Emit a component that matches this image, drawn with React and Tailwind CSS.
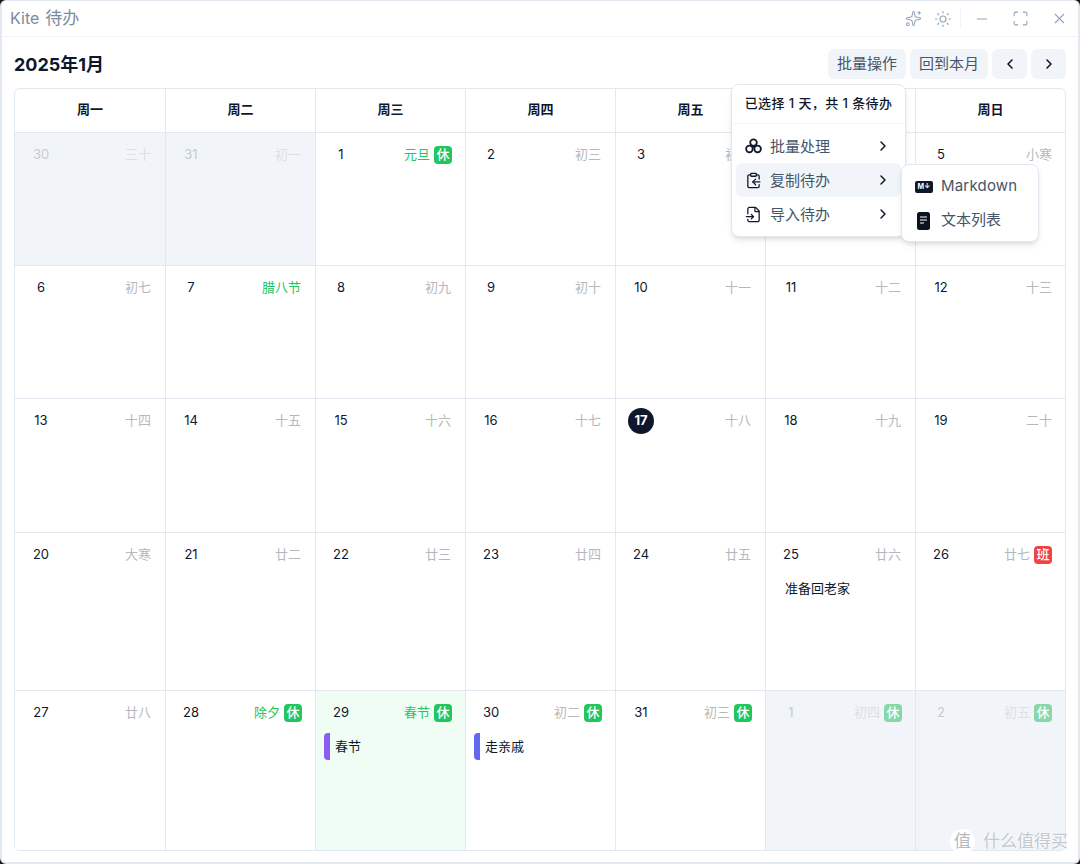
import React from 'react'
import { ChevronLeft, ChevronRight, Minus, Maximize, X, Sun, Sparkles, ClipboardCopy, FileInput } from 'lucide-react'

const weekdays = ['周一', '周二', '周三', '周四', '周五', '周六', '周日']

const cells = [
  { day: 30, lunar: '三十', muted: true },
  { day: 31, lunar: '初一', muted: true },
  { day: 1, lunar: '元旦', festival: true, badge: '休' },
  { day: 2, lunar: '初三' },
  { day: 3, lunar: '初四' },
  { day: 4, lunar: '初五' },
  { day: 5, lunar: '小寒' },
  { day: 6, lunar: '初七' },
  { day: 7, lunar: '腊八节', festival: true },
  { day: 8, lunar: '初九' },
  { day: 9, lunar: '初十' },
  { day: 10, lunar: '十一' },
  { day: 11, lunar: '十二' },
  { day: 12, lunar: '十三' },
  { day: 13, lunar: '十四' },
  { day: 14, lunar: '十五' },
  { day: 15, lunar: '十六' },
  { day: 16, lunar: '十七' },
  { day: 17, lunar: '十八', today: true },
  { day: 18, lunar: '十九' },
  { day: 19, lunar: '二十' },
  { day: 20, lunar: '大寒' },
  { day: 21, lunar: '廿二' },
  { day: 22, lunar: '廿三' },
  { day: 23, lunar: '廿四' },
  { day: 24, lunar: '廿五' },
  { day: 25, lunar: '廿六', todo: '准备回老家' },
  { day: 26, lunar: '廿七', badge: '班' },
  { day: 27, lunar: '廿八' },
  { day: 28, lunar: '除夕', festival: true, badge: '休' },
  { day: 29, lunar: '春节', festival: true, badge: '休', todo: '春节', bar: 'bg-[#8b5cf6]', holiday: true },
  { day: 30, lunar: '初二', badge: '休', todo: '走亲戚', bar: 'bg-[#6366f1]' },
  { day: 31, lunar: '初三', badge: '休' },
  { day: 1, lunar: '初四', badge: '休', muted: true },
  { day: 2, lunar: '初五', badge: '休', muted: true },
]

function DayCell({ cell, index }) {
  const firstCol = index % 7 === 0
  const lastCol = index % 7 === 6
  const lastRow = index >= 28
  return (
    <div
      className={`pt-[9px] ${firstCol ? '' : 'border-l'} ${lastRow ? '' : 'border-b'} border-[#e2e8f0] ${
        cell.muted ? 'bg-[#f1f5f9]' : cell.holiday ? 'bg-[#f0fdf4]' : 'bg-white'
      }`}
    >
      <div
        className={`flex h-[26px] items-center justify-between ${firstCol ? 'pl-[13px]' : 'pl-3'} ${
          cell.badge || lastCol ? 'pr-[13px]' : 'pr-[14px]'
        }`}
      >
        <span
          className={`flex size-[26px] items-center justify-center rounded-full text-[13px] ${
            cell.today ? 'bg-[#0f172a] font-bold text-white' : cell.muted ? 'text-[#c3cad6]' : 'text-[#0f172a]'
          }`}
        >
          {cell.day}
        </span>
        <span className="flex items-center gap-1">
          <span
            className={`text-[13px] ${
              cell.muted ? 'text-[#dcdfe5]' : cell.festival ? 'text-[#22c55e]' : 'text-[#b5b8bd]'
            }`}
          >
            {cell.lunar}
          </span>
          {cell.badge && (
            <span
              className={`flex size-[18px] items-center justify-center rounded-[4px] text-[13px] font-medium text-white ${
                cell.badge === '班' ? 'bg-[#ef4444]' : cell.muted ? 'bg-[#86d9a6]' : 'bg-[#22c55e]'
              }`}
            >
              {cell.badge}
            </span>
          )}
        </span>
      </div>
      {cell.todo && (
        <div className="mt-[7px] flex h-[27px] items-center">
          {cell.bar ? (
            <span className={`ml-[8px] mr-[5px] h-[27px] w-[6px] rounded-l-[4px] ${cell.bar}`} />
          ) : (
            <span className="w-[19px]" />
          )}
          <span className="text-[13px] text-[#0f172a]">{cell.todo}</span>
        </div>
      )}
    </div>
  )
}

function GroupIcon() {
  return (
    <svg width="17" height="16" viewBox="0 0 17 16" fill="none" stroke="#0f172a" strokeWidth="1.8">
      <circle cx="8.5" cy="4.6" r="3.3" />
      <circle cx="4.4" cy="11" r="3.3" />
      <circle cx="12.6" cy="11" r="3.3" />
      <circle cx="8.5" cy="8.6" r="1.2" fill="#0f172a" stroke="none" />
    </svg>
  )
}

function MenuRow({ icon, label, active }) {
  return (
    <div className={`flex h-[34px] items-center rounded-md pl-[8px] pr-[10px] ${active ? 'bg-[#f1f5f9]' : ''}`}>
      <span className="flex w-[18px] justify-center">{icon}</span>
      <span className="ml-[8px] flex-1 pt-[2px] text-[15px] text-[#475569]">{label}</span>
      <ChevronRight size={16} strokeWidth={2.2} className="text-[#0f172a]" />
    </div>
  )
}

export default function App() {
  return (
    <div className="h-[864px] w-[1080px] bg-[#1a1a1a]">
      <div className="relative h-[864px] w-[1080px] overflow-hidden rounded-[6px] border-2 border-t border-[#e2e8f0] bg-white font-['Inter','Noto_Sans_CJK_SC',sans-serif]">
        {/* title bar */}
        <div className="flex h-9 items-center justify-between border-b border-[#f1f5f9] pl-2 pr-[10px]">
          <span className="text-base text-[#7c8aa0]">
            Kite<span className="ml-[6px] text-[17px]">待办</span>
          </span>
          <div className="flex items-center text-[#94a3b8]">
            <Sparkles size={17} strokeWidth={1.5} />
            <Sun size={18} strokeWidth={1.5} className="ml-[12px]" />
            <span className="ml-[8px] h-5 w-px bg-[#f1f5f9]" />
            <Minus size={16} strokeWidth={1.5} className="ml-[13px]" />
            <Maximize size={17} strokeWidth={1.5} className="ml-[22px]" />
            <X size={17} strokeWidth={1.5} className="ml-[22px]" />
          </div>
        </div>

        {/* toolbar */}
        <div className="flex h-[51px] items-center justify-between px-3 pt-[2px]">
          <h1 className="pt-[2px] text-lg font-bold text-[#0f172a]">2025年1月</h1>
          <div className="flex items-center gap-1">
            <button className="h-[30px] w-[78px] rounded-md bg-[#f1f5f9] pt-[2px] text-[15px] text-[#475569]">批量操作</button>
            <button className="h-[30px] w-[78px] rounded-md bg-[#f1f5f9] pt-[2px] text-[15px] text-[#475569]">回到本月</button>
            <button className="flex h-[30px] w-[35px] items-center justify-center rounded-md bg-[#f1f5f9] text-[#0f172a]">
              <ChevronLeft size={16} strokeWidth={2.4} />
            </button>
            <button className="flex h-[30px] w-[35px] items-center justify-center rounded-md bg-[#f1f5f9] text-[#0f172a]">
              <ChevronRight size={16} strokeWidth={2.4} />
            </button>
          </div>
        </div>

        {/* calendar */}
        <div className="mx-3 overflow-hidden rounded-md border border-[#e2e8f0]">
          <div className="grid h-[44px] grid-cols-7 border-b border-[#e2e8f0]">
            {weekdays.map((name, i) => (
              <div
                key={name}
                className={`flex items-center justify-center pb-[2px] text-[13px] font-semibold text-[#0f172a] ${
                  i > 0 ? 'border-l border-[#e2e8f0]' : ''
                }`}
              >
                {name}
              </div>
            ))}
          </div>
          <div className="grid grid-cols-7 grid-rows-[133px_133px_134px_158px_159px]">
            {cells.map((cell, i) => (
              <DayCell key={i} cell={cell} index={i} />
            ))}
          </div>
        </div>

        {/* batch menu */}
        <div className="absolute left-[729px] top-[83px] w-[175px] rounded-lg border border-[#e2e8f0] bg-white shadow-md">
          <div className="flex h-[39px] items-center justify-center border-b border-[#f1f5f9] text-[13px] font-medium tracking-[0.4px] text-[#0f172a]">
            已选择 1 天，共 1 条待办
          </div>
          <div className="px-1 py-[5px]">
            <MenuRow icon={<GroupIcon />} label="批量处理" />
            <MenuRow icon={<ClipboardCopy size={17} strokeWidth={1.8} className="text-[#0f172a]" />} label="复制待办" active />
            <MenuRow icon={<FileInput size={17} strokeWidth={1.8} className="text-[#0f172a]" />} label="导入待办" />
          </div>
        </div>

        {/* copy submenu */}
        <div className="absolute left-[899px] top-[163px] w-[138px] rounded-lg border border-[#e2e8f0] bg-white py-1 shadow-md">
          <div className="flex h-[35px] items-center pl-[13px]">
            <span className="flex h-[12px] w-[18px] items-center justify-center rounded-[2px] bg-[#0f172a] text-[7px] font-bold leading-none text-white">
              M↓
            </span>
            <span className="ml-[8px] text-[15px] tracking-[0.2px] text-[#475569]">Markdown</span>
          </div>
          <div className="flex h-[33px] items-center pl-[15px]">
            <svg width="13" height="18" viewBox="0 0 13 18">
              <rect width="13" height="18" rx="2.5" fill="#0b1220" />
              <path d="M3 5h7M3 8h7M3 11h4" stroke="#fff" strokeWidth="1.2" />
            </svg>
            <span className="ml-[11px] text-[15px] text-[#475569]">文本列表</span>
          </div>
        </div>

        {/* watermark */}
        <div className="absolute left-[948px] top-[828px] flex items-center gap-[8px]">
          <span className="flex size-[25px] items-center justify-center rounded-full bg-white text-[17px] text-[#b5b8bd]">值</span>
          <span className="text-[17px] text-[#c4c8cf] [text-shadow:0_0_2px_white]">什么值得买</span>
        </div>
      </div>
    </div>
  )
}
